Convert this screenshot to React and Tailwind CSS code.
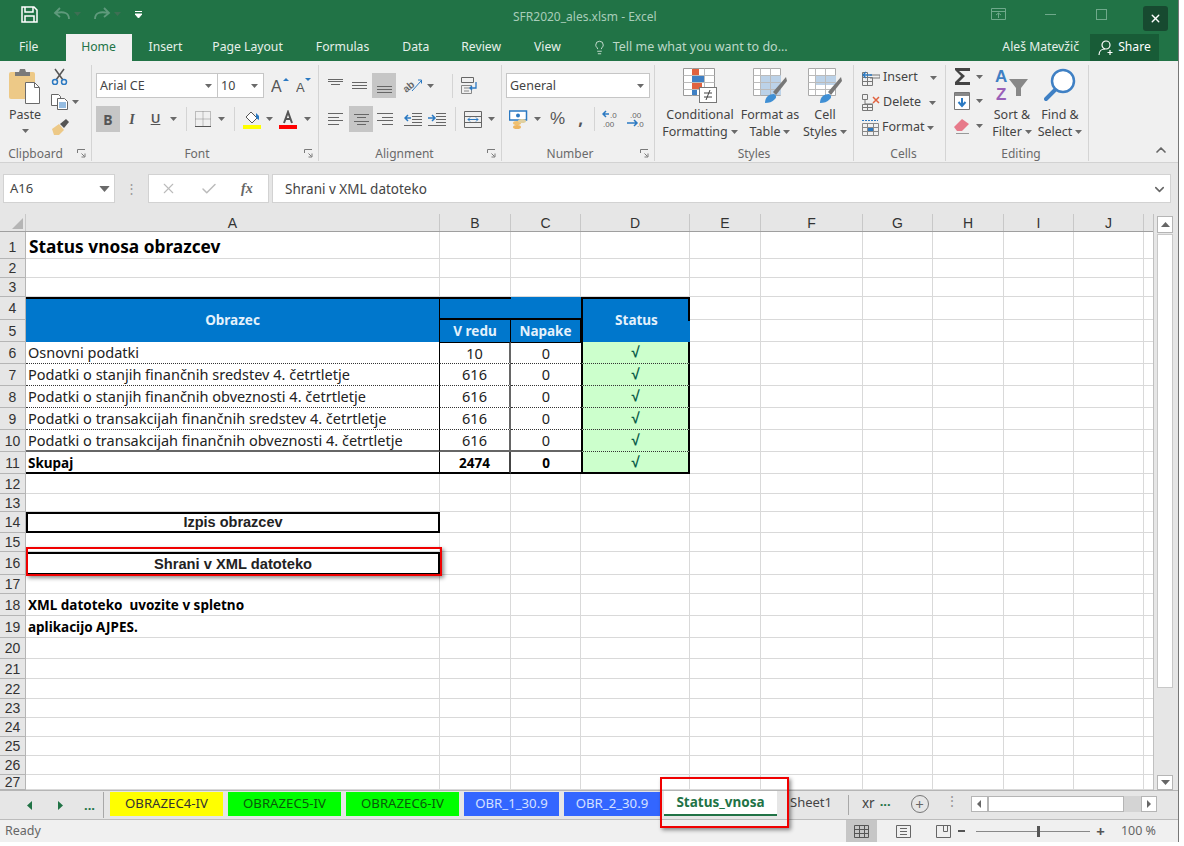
import { ChevronDown, ChevronUp, Lightbulb, X, Check } from 'lucide-react'

const Caret = ({ className = '' }) => (
  <svg width="7" height="4" viewBox="0 0 7 4" className={`shrink-0 ${className}`}><path d="M0 0h7L3.5 4z" fill="#6a6a6a" /></svg>
)

const Launcher = () => (
  <svg width="9" height="9" viewBox="0 0 9 9"><path d="M.5 4V.5H8M4.5 4.5l3 3M8 4.5V8H4.5" fill="none" stroke="#7a7a7a" /></svg>
)

// ── ribbon icons ─────────────────────────────────────────────
const PasteIcon = () => (
  <svg width="34" height="37" viewBox="0 0 34 37">
    <rect x="1" y="4" width="26" height="27" rx="2" fill="#edc987" />
    <path d="M7 8V4h4l1-3h5l1 3h4v4z" fill="#7a7a7a" />
    <path d="M17.500 14.500h9l5 5v16h-14z" fill="#fff" stroke="#6a6a6a" />
    <path d="M26.500 14.500v5h5" fill="none" stroke="#6a6a6a" />
  </svg>
)
const Scissors = () => (
  <svg width="17" height="17" viewBox="0 0 17 17" fill="none">
    <path d="M4 1l8 11M13 1L5 12" stroke="#555" strokeWidth="1.500" />
    <circle cx="4" cy="14" r="2.500" stroke="#2b79c2" strokeWidth="1.500" />
    <circle cx="13" cy="14" r="2.500" stroke="#2b79c2" strokeWidth="1.500" />
  </svg>
)
const CopyIcon = () => (
  <svg width="17" height="16" viewBox="0 0 17 16" fill="#fff" stroke="#666">
    <path d="M.5.500h7l2 2v9h-9z" />
    <path d="M6.500 4.500h7l3 3v8h-10z" />
    <path d="M8 9h7M8 11h7M8 13h7" stroke="#2b79c2" />
  </svg>
)
const BrushIcon = () => (
  <svg width="19" height="16" viewBox="0 0 19 16">
    <path d="M1 10l7-5 5 6-5 5H3z" fill="#edc987" />
    <path d="M9 5l6-5 3 3-5 6z" fill="#555" />
  </svg>
)
const BordersIcon = () => (
  <svg width="16" height="16" viewBox="0 0 16 16" fill="none">
    <path d="M.5 8h15M8 .5v15M.5.500h15v15H.500z" stroke="#888" strokeDasharray="1 1" />
    <path d="M0 15.500h16" stroke="#555" />
  </svg>
)
const FillIcon = () => (
  <svg width="18" height="19" viewBox="0 0 18 19">
    <path d="M3 7l5-5 6 6-5 5z" fill="#fff" stroke="#555" />
    <path d="M13 3l3 3v4l-3-2z" fill="#2b79c2" />
    <rect y="15" width="18" height="4" fill="#ffff00" />
  </svg>
)
const FontColorIcon = () => (
  <svg width="18" height="19" viewBox="0 0 18 19">
    <path d="M5 13L9 2l4 11M6.500 9h5" fill="none" stroke="#555" strokeWidth="2" />
    <rect y="15" width="18" height="4" fill="#ff0000" />
  </svg>
)
const Lines = ({ ys, xs }) => (
  <svg width="17" height="17" viewBox="0 0 17 17" fill="none" stroke="#666">
    {ys.map((y, i) => <path key={y} d={`M${xs[i][0]} ${y}.5H${xs[i][1]}`} />)}
  </svg>
)
const Orientation = () => (
  <svg width="20" height="18" viewBox="0 0 20 18" fill="none" className="overflow-visible">
    <text x="1" y="14" fontSize="10" fontWeight="700" fill="#666" transform="rotate(-40 5 12)" fontFamily="Liberation Sans, sans-serif">ab</text>
    <path d="M9 14L18 4M15 3h3.500v3.500" stroke="#2b79c2" />
  </svg>
)
const Indent = ({ flip }) => (
  <svg width="18" height="14" viewBox="0 0 18 14" fill="none">
    <path d="M8 1.500h10M8 4.500h10M8 7.500h10M8 10.500h10M0 13.500h18" stroke="#666" />
    <path d={flip ? 'M0 6h6M4 3l3 3-3 3' : 'M7 6H1M4 3L1 6l3 3'} stroke="#2b79c2" strokeWidth="1.500" />
  </svg>
)
const WrapIcon = () => (
  <svg width="19" height="17" viewBox="0 0 19 17" fill="none">
    <path d="M.5.500h12v5H.5z" stroke="#666" />
    <path d="M.5 8.500h10v8H.5zM3 11h6M3 14h5" stroke="#888" />
    <path d="M15 5v6H9M11 9l-2 2 2 2" stroke="#2b79c2" strokeWidth="1.300" />
  </svg>
)
const MergeIcon = () => (
  <svg width="18" height="17" viewBox="0 0 18 17" fill="none" stroke="#666">
    <path d="M.5.500h17v16H.500zM.5 5.500h17M.5 11.500h17" />
    <path d="M4 8.500h10M4 8.500l2-2M4 8.500l2 2M14 8.500l-2-2M14 8.500l-2 2" stroke="#2b79c2" />
  </svg>
)
const MoneyIcon = () => (
  <svg width="19" height="19" viewBox="0 0 19 19">
    <rect x="0.500" y="1" width="17" height="9" fill="#fff" stroke="#2b79c2" strokeWidth="1.500" />
    <circle cx="9" cy="5.500" r="2" fill="#2b79c2" />
    <ellipse cx="8" cy="13" rx="4" ry="2" fill="#f0c070" />
    <ellipse cx="13" cy="11" rx="4" ry="2" fill="#e0d0a0" />
    <ellipse cx="8" cy="17" rx="4" ry="2" fill="#edb560" />
  </svg>
)
const Decimals = ({ more }) => (
  <svg width="18" height="19" viewBox="0 0 18 19" fill="none">
    <path d={more ? 'M10 13H1M8 10l3 3-3 3' : 'M7 4H1M4 1L1 4l3 3'} stroke="#2b79c2" strokeWidth="1.500" />
    <text x={more ? 4 : 8} y="8" fontSize="8" fill="#666" fontFamily="Liberation Sans, sans-serif">{more ? '.00' : '.0'}</text>
    <text x={more ? 11 : 1} y="17" fontSize="8" fill="#666" fontFamily="Liberation Sans, sans-serif">{more ? '.0' : '.00'}</text>
  </svg>
)
const Conditional = () => (
  <svg width="34" height="36" viewBox="0 0 34 36">
    <path d="M.5.500h31v27H.500z" fill="#fff" stroke="#999" />
    <path d="M.5 7.500h31M.5 14.500h31M.5 21.500h31M9.500.5v27M21.500.5v27" stroke="#bbb" fill="none" />
    <rect x="9" y="1" width="7" height="6" fill="#e0623f" />
    <rect x="9" y="8" width="12" height="6" fill="#3f80c4" />
    <rect x="9" y="15" width="10" height="6" fill="#e0623f" />
    <rect x="9" y="22" width="5" height="5" fill="#3f80c4" />
    <rect x="16.500" y="19.500" width="17" height="15" fill="#fff" stroke="#777" />
    <path d="M21 25h8M21 29h8M27 22l-4 10" stroke="#444" fill="none" />
  </svg>
)
const TableStyle = ({ fill }) => (
  <svg width="34" height="36" viewBox="0 0 34 36">
    <path d="M.5.500h27v27H.500z" fill="#fff" stroke="#aaa" />
    <rect x="7" y="7" width="21" height={fill ? 10 : 20} fill="#bcd2e8" />
    <path d="M.5 7.500h27M.5 14.500h27M.5 21.500h27M7.500.5v27M17.500.5v27" stroke="#bbb" fill="none" />
    <path d="M33 9L20 24l3 3L34 13z" fill="#777" />
    <path d="M12 35c0-6 4-9 9-9 2 1 3 3 1 5-3 3-6 4-10 4z" fill="#3f8fd4" />
  </svg>
)
const InsertIcon = () => (
  <svg width="18" height="17" viewBox="0 0 18 17" fill="none" stroke="#777">
    <path d="M.5 3.500h5v5h-5zM.5 8.500h10v8H.5zM5.500 8.500v8M.5 12.500h10M8 6h10v3H8" />
    <path d="M10 6H1M4 3L1 6l3 3" stroke="#2b79c2" strokeWidth="1.300" />
  </svg>
)
const DeleteIcon = () => (
  <svg width="18" height="17" viewBox="0 0 18 17" fill="none" stroke="#777">
    <path d="M.5.500h5v5h-5zM.5 10.500h10v6H.5zM5.500 10.500v6M.5 13.500h10M3 6v4h8" />
    <path d="M11 3l6 6M17 3l-6 6" stroke="#e0623f" strokeWidth="1.500" />
  </svg>
)
const FormatIcon = () => (
  <svg width="17" height="17" viewBox="0 0 17 17" fill="none" stroke="#888">
    <path d="M.5 4.500h16v12H.500zM.5 8.500h16M.5 12.500h16M5.500 4.500v12M11.500 4.500v12" />
    <path d="M0 1.500h16" stroke="#2b79c2" strokeDasharray="2 1" />
    <rect x="6" y="9" width="5" height="3" fill="#2b79c2" stroke="none" />
  </svg>
)
const Sigma = () => (
  <svg width="17" height="17" viewBox="0 0 17 17"><path d="M1 0h15v3H5l6 5-6 6h11v3H1v-3l6-6-6-6z" fill="#444" /></svg>
)
const FillDown = () => (
  <svg width="16" height="18" viewBox="0 0 16 18">
    <path d="M.5.500h15v17H.500z" fill="#fff" stroke="#777" />
    <rect x="1" y="1" width="14" height="3" fill="#888" />
    <path d="M8 6v8M4.500 10L8 14l3.500-4" fill="none" stroke="#2b79c2" strokeWidth="2" />
  </svg>
)
const Eraser = () => (
  <svg width="16" height="16" viewBox="0 0 16 16">
    <path d="M0 9l8-8 7 5-7 7H3z" fill="#e77a8a" />
    <path d="M2 15.500h13" stroke="#999" />
  </svg>
)
const SortFilter = () => (
  <svg width="34" height="34" viewBox="0 0 34 34" fontFamily="Liberation Sans, sans-serif" fontWeight="700" fontSize="17" className="overflow-visible">
    <text x="0" y="14" fill="#3f80c4">A</text>
    <text x="1" y="32" fill="#9a60b8">Z</text>
    <path d="M14 11h19l-7 9v8h-5v-8z" fill="#888" />
  </svg>
)
const Magnifier = () => (
  <svg width="32" height="34" viewBox="0 0 32 34" fill="none">
    <circle cx="19" cy="13" r="11" fill="#fff" stroke="#3f80c4" strokeWidth="2.500" />
    <path d="M11 22L2 31" stroke="#3f80c4" strokeWidth="4" strokeLinecap="round" />
  </svg>
)

// ── ribbon pieces ────────────────────────────────────────────
function Group({ className, label, launcher, children }) {
  return (
    <div className={`flex flex-col h-[96px] border-r border-[#d4d4d4] shrink-0 ${className}`}>
      <div className="h-[81px] flex">{children}</div>
      <div className={`relative h-[15px] flex items-center justify-center text-[12px] text-[#6a6a6a] ${launcher ? 'pr-[20px]' : ''}`}>
        {label}
        {launcher && <span className="absolute right-[5px] top-[3px] flex"><Launcher /></span>}
      </div>
    </div>
  )
}

const Select = ({ className, text }) => (
  <div className={`h-[25px] bg-white border border-[#c6c6c6] flex items-center justify-between pl-[3px] pr-[3px] pt-[1px] text-[12.500px] text-[#444] ${className}`}>
    <span>{text}</span>
    <Caret className="mr-[2px]" />
  </div>
)

const BigButton = ({ className, icon, top, bottom }) => (
  <div className={`flex flex-col items-center text-[12.500px] leading-[17px] text-[#444] ${className}`}>
    <div className="h-[38px]">{icon}</div>
    <div className="whitespace-nowrap">{top}</div>
    <div className="flex items-center gap-[3px] whitespace-nowrap">{bottom}<Caret /></div>
  </div>
)

const CellCmd = ({ icon, label, gap }) => (
  <div className="h-[25px] flex items-center text-[12.500px] text-[#444]">
    {icon}
    <span className={`ml-[3px] ${gap}`}>{label}</span>
    <Caret />
  </div>
)

const Sep = () => <div className="w-px h-[24px] bg-[#d4d4d4]" />

// ── sheet ────────────────────────────────────────────────────
const ROW_CELL = 'border-r border-b border-[#d9d9d9]'
const DOTTED = 'border-b border-b-[#333] [border-bottom-style:dotted]'
const Blank = ({ last }) => <div className={last ? 'border-b border-[#d9d9d9]' : ROW_CELL} />

function SheetRow({ n, blanks, children, labelClass = '' }) {
  return (
    <>
      <div className={`bg-[#e6e6e6] border-r border-b border-[#b5b5b5] flex items-center justify-center text-[14px] leading-none text-[#333] font-['Liberation_Sans',sans-serif] ${labelClass}`}>{n}</div>
      {children}
      {Array.from({ length: blanks }).map((_, i) => <Blank key={i} last={i === blanks - 1} />)}
    </>
  )
}

const DATA = [
  [6, 'Osnovni podatki', '10'],
  [7, 'Podatki o stanjih finančnih sredstev 4. četrtletje', '616'],
  [8, 'Podatki o stanjih finančnih obveznosti 4. četrtletje', '616'],
  [9, 'Podatki o transakcijah finančnih sredstev 4. četrtletje', '616'],
  [10, 'Podatki o transakcijah finančnih obveznosti 4. četrtletje', '616'],
]

const Tick = ({ className }) => (
  <div className={`bg-[#ccffcc] border-l-2 border-r-2 border-black flex items-center justify-center text-[15px] font-bold text-[#0b5c4a] font-['Liberation_Sans',sans-serif] ${className}`}>√</div>
)

const TABS = [
  ['OBRAZEC4-IV', 'w-[113px] bg-[#ffff00] text-[#333]'],
  ['OBRAZEC5-IV', 'w-[113px] bg-[#00ff00] text-[#0a5a0a]'],
  ['OBRAZEC6-IV', 'w-[113px] bg-[#00ff00] text-[#0a5a0a]'],
  ['OBR_1_30.9', 'w-[95px] bg-[#3366ff] text-[#d5e0ff]'],
  ['OBR_2_30.9', 'w-[96px] bg-[#3366ff] text-[#d5e0ff]'],
]

export default function App() {
  const heads = [['A', 'w-[414px]'], ['B', 'w-[71px]'], ['C', 'w-[70px]'], ['D', 'w-[109px]'], ['E', 'w-[71px]'], ['F', 'w-[102px]'], ['G', 'w-[70px]'], ['H', 'w-[71px]'], ['I', 'w-[70px]'], ['J', 'w-[70px]']]

  return (
    <div className="w-[1184px] h-[846px] bg-white overflow-hidden font-['Noto_Sans',sans-serif]">
      <div className="relative w-[1179px] h-[842px] flex flex-col bg-[#e6e6e6] border-r border-[#777] overflow-hidden">

        {/* title bar */}
        <div className="h-[34px] bg-[#217346] flex items-center shrink-0 relative text-[12px] text-[#a8cdb9]">
          <svg width="17" height="17" viewBox="0 0 17 17" className="ml-[21px] mt-[-6px]" fill="none" stroke="#fff" strokeWidth="1.500">
            <path d="M1 1h12l3 3v12H1z" />
            <path d="M4 1v5h8V1M4 16v-6h9v6" />
          </svg>
          <svg width="18" height="14" viewBox="0 0 18 14" className="ml-[15px] mt-[-6px]" fill="none" stroke="#5f9a7c" strokeWidth="1.800">
            <path d="M16 12c0-6-5-8-13-6M7 1L2 6l5 4" />
          </svg>
          <Caret className="ml-[3px] mt-[-6px] opacity-40" />
          <svg width="18" height="14" viewBox="0 0 18 14" className="ml-[12px] mt-[-6px]" fill="none" stroke="#5f9a7c" strokeWidth="1.800">
            <path d="M2 12c0-6 5-8 13-6M11 1l5 5-5 4" />
          </svg>
          <Caret className="ml-[3px] mt-[-6px] opacity-40" />
          <svg width="7" height="8" viewBox="0 0 7 8" className="ml-[14px] mt-[-5px]"><path d="M0 .5h7M0 3h7l-3.500 4z" stroke="#fff" fill="#fff" strokeWidth="1" /></svg>
          <span className="ml-[371px] mt-[-1px] text-[12px]">SFR2020_ales.xlsm - Excel</span>
          <svg width="15" height="12" viewBox="0 0 15 12" className="ml-[334px] mt-[-6px]" fill="none" stroke="#6fa98b"><path d="M.5.500h14v11H.5zM.5 3.500h14M7.500 10V5M5 7l2.500-2L10 7" /></svg>
          <div className="ml-[39px] mt-[-6px] w-[11px] h-px bg-[#6fa98b]" />
          <div className="ml-[40px] mt-[-6px] w-[11px] h-[11px] border border-[#6fa98b]" />
          <div className="ml-[36px] mt-[2px] w-[25px] h-[25px] rounded-[3px] bg-[#174a30] flex items-center justify-center">
            <X size={13} color="#fff" strokeWidth={2.500} />
          </div>
        </div>

        {/* ribbon tabs */}
        <div className="h-[27px] bg-[#217346] flex items-end shrink-0 text-[12.200px] text-[#e6f0ea]">
          <div className="ml-[19px] h-[27px] flex items-center">File</div>
          <div className="ml-[27px] w-[66px] h-[27px] bg-[#f0f0f0] text-[#217346] flex items-center justify-center">Home</div>
          <div className="ml-[17px] h-[27px] flex items-center">Insert</div>
          <div className="ml-[30px] h-[27px] flex items-center">Page Layout</div>
          <div className="ml-[33px] h-[27px] flex items-center">Formulas</div>
          <div className="ml-[33px] h-[27px] flex items-center">Data</div>
          <div className="ml-[32px] h-[27px] flex items-center">Review</div>
          <div className="ml-[33px] h-[27px] flex items-center">View</div>
          <div className="ml-[31px] h-[27px] flex items-center text-[12.500px] text-[#bcd8c8]">
            <Lightbulb size={15} strokeWidth={1.300} color="#e6f0ea" />
            <span className="ml-[6px]">Tell me what you want to do...</span>
          </div>
          <div className="ml-auto h-[27px] flex items-center">Aleš Matevžič</div>
          <div className="ml-[11px] mr-[19px] w-[69px] h-[27px] bg-[#185c37] flex items-center justify-center gap-[3px] text-white">
            <svg width="17" height="16" viewBox="0 0 17 16" fill="none" stroke="#fff" strokeWidth="1.200">
              <circle cx="8" cy="5" r="4" />
              <path d="M1 15c0-4 3-6 6-6M12 10v5M9.500 12.500h5" />
            </svg>
            Share
          </div>
        </div>

        {/* ribbon */}
        <div className="h-[102px] bg-[#f0f0f0] border-b border-[#d2d2d2] flex pt-[4px] shrink-0">
          <Group className="w-[92px]" label="Clipboard" launcher>
            <div className="ml-[8px] w-[34px] pt-[3px] flex flex-col items-center text-[12.500px] text-[#444]">
              <PasteIcon />
              <span className="mt-[1px] leading-[18px]">Paste</span>
              <Caret className="mt-[5px]" />
            </div>
            <div className="ml-[9px] pt-[3px] flex flex-col gap-[9px]">
              <Scissors />
              <div className="flex items-center gap-[4px]"><CopyIcon /><Caret /></div>
              <BrushIcon />
            </div>
          </Group>

          <Group className="w-[227px] pl-[4px]" label="Font" launcher>
            <div className="pt-[8px] flex flex-col gap-[8px]">
              <div className="flex items-center">
                <Select className="w-[122px]" text="Arial CE" />
                <Select className="w-[47px] ml-[-1px]" text="10" />
                <svg width="20" height="19" viewBox="0 0 20 19" className="ml-[7px]" fontFamily="Liberation Sans, sans-serif" fontSize="16"><text x="0" y="16" fill="#555">A</text><path d="M12 5l3-3 3 3z" fill="#2b79c2" /></svg>
                <svg width="17" height="19" viewBox="0 0 17 19" className="ml-[5px]" fontFamily="Liberation Sans, sans-serif" fontSize="13"><text x="0" y="16" fill="#555">A</text><path d="M9 2h6l-3 3z" fill="#2b79c2" /></svg>
              </div>
              <div className="flex items-center h-[26px] text-[#555]">
                <div className="w-[24px] h-[26px] bg-[#c6c6c6] flex items-center justify-center font-bold text-[14px]">B</div>
                <div className="ml-[4px] w-[16px] text-center italic font-semibold text-[14px] font-['Liberation_Serif',serif]">I</div>
                <div className="ml-[8px] w-[15px] text-center underline font-semibold text-[13px]">U</div>
                <Caret className="ml-[7px]" />
                <div className="ml-[9px]"><Sep /></div>
                <div className="ml-[8px]"><BordersIcon /></div>
                <Caret className="ml-[7px]" />
                <div className="ml-[9px]"><Sep /></div>
                <div className="ml-[8px]"><FillIcon /></div>
                <Caret className="ml-[5px]" />
                <div className="ml-[6px]"><FontColorIcon /></div>
                <Caret className="ml-[7px]" />
              </div>
            </div>
          </Group>

          <Group className="w-[183px] pl-[9px]" label="Alignment" launcher>
            <div className="pt-[8px] flex flex-col gap-[8px]">
              <div className="flex items-center h-[25px]">
                <Lines ys={[2, 4, 7]} xs={[[0, 15], [0, 15], [3, 12]]} />
                <div className="ml-[7px]"><Lines ys={[5, 8, 11]} xs={[[0, 15], [0, 15], [0, 15]]} /></div>
                <div className="ml-[3px] w-[24px] h-[25px] bg-[#c6c6c6] flex items-center justify-center"><Lines ys={[9, 12, 15]} xs={[[1, 16], [1, 16], [1, 16]]} /></div>
                <div className="ml-[7px]"><Orientation /></div>
                <Caret className="ml-[4px]" />
                <div className="ml-[18px]"><Sep /></div>
                <div className="ml-[8px]"><WrapIcon /></div>
              </div>
              <div className="flex items-center h-[26px]">
                <Lines ys={[2, 6, 9, 13]} xs={[[0, 15], [0, 11], [0, 15], [0, 11]]} />
                <div className="ml-[4px] w-[24px] h-[26px] bg-[#c6c6c6] flex items-center justify-center"><Lines ys={[3, 6, 10, 13]} xs={[[1, 16], [4, 13], [1, 16], [4, 13]]} /></div>
                <div className="ml-[4px]"><Lines ys={[2, 6, 9, 13]} xs={[[0, 16], [5, 16], [0, 16], [5, 16]]} /></div>
                <div className="ml-[10px]"><Indent /></div>
                <div className="ml-[6px]"><Indent flip /></div>
                <div className="ml-[9px]"><Sep /></div>
                <div className="ml-[8px]"><MergeIcon /></div>
                <Caret className="ml-[6px]" />
              </div>
            </div>
          </Group>

          <Group className="w-[153px] pl-[4px]" label="Number" launcher>
            <div className="pt-[8px] flex flex-col gap-[8px]">
              <Select className="w-[144px]" text="General" />
              <div className="flex items-center h-[26px]">
                <div className="ml-[3px]"><MoneyIcon /></div>
                <Caret className="ml-[6px]" />
                <span className="ml-[9px] text-[17px] text-[#555] font-['Liberation_Sans',sans-serif]">%</span>
                <span className="ml-[13px] w-[10px] text-[17px] font-bold text-[#555]">,</span>
                <div className="ml-[6px]"><Sep /></div>
                <div className="ml-[7px]"><Decimals /></div>
                <div className="ml-[6px]"><Decimals more /></div>
              </div>
            </div>
          </Group>

          <Group className="w-[199px]" label="Styles">
            <div className="pt-[3px] flex">
              <BigButton className="w-[78px] ml-[6px]" icon={<Conditional />} top="Conditional" bottom="Formatting" />
              <BigButton className="w-[58px] ml-[2px]" icon={<TableStyle />} top="Format as" bottom="Table" />
              <BigButton className="w-[44px] ml-[4px]" icon={<TableStyle fill />} top="Cell" bottom="Styles" />
            </div>
          </Group>

          <Group className="w-[92px] pl-[8px]" label="Cells">
            <div className="pt-[0px]">
              <CellCmd icon={<InsertIcon />} label="Insert" gap="mr-[12px]" />
              <CellCmd icon={<DeleteIcon />} label="Delete" gap="mr-[8px]" />
              <CellCmd icon={<FormatIcon />} label="Format" gap="mr-[3px]" />
            </div>
          </Group>

          <Group className="w-[143px] pl-[8px]" label="Editing">
            <div className="pt-[3px] w-[34px] flex flex-col gap-[7px]">
              <div className="flex items-center gap-[5px]"><Sigma /><Caret /></div>
              <div className="flex items-center gap-[6px]"><FillDown /><Caret /></div>
              <div className="flex items-center gap-[6px] mt-[1px]"><Eraser /><Caret /></div>
            </div>
            <BigButton className="w-[38px] ml-[5px] pt-[3px]" icon={<SortFilter />} top="Sort &" bottom="Filter" />
            <BigButton className="w-[44px] ml-[7px] pt-[3px]" icon={<Magnifier />} top="Find &" bottom="Select" />
          </Group>

          <div className="flex-1 flex justify-end items-end pr-[9px] pb-[4px]">
            <ChevronUp size={16} strokeWidth={2.500} color="#666" />
          </div>
        </div>

        {/* formula bar */}
        <div className="h-[51px] pt-[11px] pl-[3px] flex shrink-0 items-start">
          <div className="w-[112px] h-[29px] bg-white border border-[#d2d2d2] flex items-center justify-between px-[6px] pt-[1px] text-[13px] text-[#444]">
            A16
            <Caret className="scale-150" />
          </div>
          <div className="w-[33px] h-[29px] flex items-center justify-center text-[#999] text-[13px] leading-none">⋮</div>
          <div className="w-[121px] h-[29px] bg-white border border-[#d2d2d2] flex items-center">
            <X size={17} strokeWidth={1.500} color="#bbb" className="ml-[11px]" />
            <Check size={18} strokeWidth={2} color="#bbb" className="ml-[23px]" />
            <span className="ml-[23px] italic font-semibold text-[14px] text-[#666] font-['Liberation_Serif',serif]">fx</span>
          </div>
          <div className="ml-[3px] w-[899px] h-[29px] bg-white border border-[#d2d2d2] flex items-center justify-between pl-[12px] pr-[3px] pt-[1px] text-[13.500px] text-[#444]">
            Shrani v XML datoteko
            <ChevronDown size={15} strokeWidth={2.500} color="#666" />
          </div>
        </div>

        {/* column headers + cells + scrollbar */}
        <div className="flex h-[576px] shrink-0 bg-white">
          <div className="w-[1154px] shrink-0 flex flex-col border-r border-[#c0c0c0]">
            <div className="h-[18px] flex bg-[#e6e6e6] border-b border-[#9f9f9f] text-[14px] leading-none text-[#333] font-['Liberation_Sans',sans-serif] shrink-0">
              <div className="w-[26px] border-r border-[#c8c8c8] flex items-end justify-end p-[2px]">
                <svg width="11" height="11" viewBox="0 0 11 11"><path d="M11 0v11H0z" fill="#b5b5b5" /></svg>
              </div>
              {heads.map(([h, w]) => (
                <div key={h} className={`${w} border-r border-[#c8c8c8] flex items-center justify-center`}>{h}</div>
              ))}
            </div>

            <div className="grid flex-1 grid-cols-[26px_414px_71px_70px_109px_71px_102px_70px_71px_70px_70px_9px] grid-rows-[27px_19px_19px_23px_22px_22px_22px_22px_22px_22px_22px_20px_18px_21px_19px_23px_19px_22px_22px_21px_20px_20px_19px_19px_19px_19px_15px] text-[14.500px] text-[#222]">
              <SheetRow n={1} blanks={10} labelClass="pt-[3px]">
                <div className={`${ROW_CELL} pl-[3px] pt-[3px] flex items-center text-[17.300px] font-bold text-black whitespace-nowrap`}>Status vnosa obrazcev</div>
              </SheetRow>
              <SheetRow n={2} blanks={11} />
              <SheetRow n={3} blanks={11} />

              <SheetRow n={4} blanks={7}>
                <div className="row-span-2 bg-[#0077cc] border-t-2 border-r border-black flex items-center justify-center font-bold text-[13.500px] text-[#e4f1fb]">Obrazec</div>
                <div className="col-span-2 bg-[#0077cc] border-b-2 border-black relative">
                  <div className="absolute top-0 left-0 w-[71px] h-[2px] bg-black" />
                </div>
                <div className="row-span-2 bg-[#0077cc] border-l-2 border-t-2 border-black flex items-center justify-center font-bold text-[13.500px] text-[#e4f1fb] relative">
                  Status
                  <div className="absolute top-0 right-0 w-[2px] h-[22px] bg-black" />
                </div>
              </SheetRow>
              <SheetRow n={5} blanks={7}>
                <div className="bg-[#0077cc] border-r border-black flex items-center justify-center font-bold text-[13.500px] text-[#e4f1fb]">V redu</div>
                <div className="bg-[#0077cc] border-r border-black flex items-center justify-center font-bold text-[13.500px] text-[#e4f1fb]">Napake</div>
              </SheetRow>

              {DATA.map(([n, label, ok], i) => (
                <SheetRow key={n} n={n} blanks={7}>
                  <div className={`pl-[2px] pt-[1px] flex items-center whitespace-nowrap border-r border-r-black ${i === 4 ? 'border-b-2 border-b-[#666]' : DOTTED}`}>{label}</div>
                  <div className={`pt-[1px] flex items-center justify-center border-r-2 border-r-[#666] ${i === 0 ? 'border-t border-t-black' : ''} ${i === 4 ? 'border-b-2 border-b-[#666]' : DOTTED}`}>{ok}</div>
                  <div className={`pt-[1px] flex items-center justify-center ${i === 0 ? 'border-t border-t-black' : ''} ${i === 4 ? 'border-b-2 border-b-[#666]' : DOTTED}`}>0</div>
                  <Tick className={DOTTED} />
                </SheetRow>
              ))}

              <SheetRow n={11} blanks={7}>
                <div className="pl-[2px] pt-[2px] flex items-center font-bold text-[13.500px] text-black border-r border-b-2 border-black">Skupaj</div>
                <div className="pt-[2px] flex items-center justify-center font-bold text-[13.500px] text-black border-r-2 border-b-2 border-r-[#444] border-b-black">2474</div>
                <div className="pt-[2px] flex items-center justify-center font-bold text-[13.500px] text-black border-b-2 border-black">0</div>
                <Tick className="border-b-2 border-b-black" />
              </SheetRow>
              <SheetRow n={12} blanks={11} />
              <SheetRow n={13} blanks={11} />
              <SheetRow n={14} blanks={10}>
                <div className="border-2 border-black flex items-center justify-center font-bold text-[14.500px] text-[#222] font-['Liberation_Sans',sans-serif]">Izpis obrazcev</div>
              </SheetRow>
              <SheetRow n={15} blanks={11} />
              <SheetRow n={16} blanks={10}>
                <div className="border-2 border-black pt-[2px] flex items-center justify-center font-bold text-[14.700px] text-[#222] font-['Liberation_Sans',sans-serif]">Shrani v XML datoteko</div>
              </SheetRow>
              <SheetRow n={17} blanks={11} />
              <SheetRow n={18} blanks={10}>
                <div className={`${ROW_CELL} pl-[2px] pt-[1px] flex items-center font-bold text-[13.500px] text-black`}>XML datoteko&nbsp; uvozite v spletno</div>
              </SheetRow>
              <SheetRow n={19} blanks={10}>
                <div className={`${ROW_CELL} pl-[2px] pt-[2px] flex items-center font-bold text-[13.500px] text-black`}>aplikacijo AJPES.</div>
              </SheetRow>
              {[20, 21, 22, 23, 24, 25, 26, 27].map((n) => <SheetRow key={n} n={n} blanks={11} />)}
            </div>
          </div>

          <div className="w-[24px] bg-[#e6e6e6] pl-[3px] pr-[5px] pt-[2px] flex flex-col shrink-0">
            <div className="h-[17px] bg-white border border-[#b5b5b5] flex items-center justify-center">
              <svg width="9" height="5" viewBox="0 0 9 5"><path d="M0 5l4.500-5L9 5z" fill="#666" /></svg>
            </div>
            <div className="mt-[1px] h-[454px] bg-white border border-[#c8c8c8]" />
            <div className="mt-auto h-[15px] bg-white border border-[#b5b5b5] flex items-center justify-center">
              <svg width="9" height="5" viewBox="0 0 9 5"><path d="M0 0l4.500 5L9 0z" fill="#666" /></svg>
            </div>
          </div>
        </div>

        {/* sheet tabs */}
        <div className="h-[30px] bg-[#e6e6e6] border-t border-t-[#b5b5b5] border-b border-b-[#bcbcbc] flex items-start shrink-0 text-[13.500px]">
          <div className="w-[104px] h-[26px] mt-[1px] flex items-center text-[#217346] border-r border-[#a8a8a8]">
            <svg width="5" height="9" viewBox="0 0 5 9" className="ml-[27px]"><path d="M5 0v9L0 4.500z" fill="#217346" /></svg>
            <svg width="5" height="9" viewBox="0 0 5 9" className="ml-[26px]"><path d="M0 0v9l5-4.500z" fill="#217346" /></svg>
            <span className="ml-[21px] font-bold text-[13px] leading-none">...</span>
          </div>
          <div className="flex gap-[5px] ml-[6px] mt-[1px]">
            {TABS.map(([t, c]) => (
              <div key={t} className={`h-[24px] flex items-center justify-center whitespace-nowrap text-[13.200px] ${c}`}>{t}</div>
            ))}
          </div>
          <div className="ml-[4px] w-[113px] h-[25px] bg-white border-b-2 border-[#217346] flex items-center justify-center font-bold text-[#217346]">Status_vnosa</div>
          <span className="ml-[13px] mt-[2px] text-[13px] text-[#444]">Sheet1</span>
          <div className="ml-[16px] mt-[4px] w-px h-[20px] bg-[#a8a8a8]" />
          <span className="ml-[13px] mt-[2px] text-[#444]">xr</span>
          <span className="ml-[5px] mt-[4px] font-bold text-[#217346] text-[13px] leading-none">...</span>
          <div className="ml-[20px] mt-[4px] w-[18px] h-[18px] rounded-full border border-[#777] flex items-center justify-center text-[#666] text-[15px] leading-none">+</div>
          <span className="ml-[16px] mt-[4px] text-[#999] leading-none">⋮</span>
          <div className="ml-[12px] mt-[5px] w-[186px] h-[16px] bg-[#d4d4d4] flex justify-between">
            <div className="flex">
              <div className="w-[17px] h-[16px] bg-white border border-[#b5b5b5] flex items-center justify-center"><svg width="4" height="8" viewBox="0 0 4 8"><path d="M4 0v8L0 4z" fill="#666" /></svg></div>
              <div className="w-[136px] h-[16px] bg-white border border-[#b5b5b5]" />
            </div>
            <div className="w-[16px] h-[16px] bg-white border border-[#b5b5b5] flex items-center justify-center"><svg width="4" height="8" viewBox="0 0 4 8"><path d="M0 0v8l4-4z" fill="#666" /></svg></div>
          </div>
        </div>

        {/* status bar */}
        <div className="flex-1 bg-[#f0f0f0] flex items-center text-[12.500px] text-[#666]">
          <span className="ml-[5px]">Ready</span>
          <div className="ml-auto flex items-center h-full">
            <div className="w-[31px] h-full bg-[#c6c6c6] flex items-center justify-center">
              <svg width="15" height="13" viewBox="0 0 15 13" fill="none" stroke="#555"><path d="M.5.500h14v12H.500zM.5 4.500h14M.5 8.500h14M5.500.5v12M10.500.5v12" /></svg>
            </div>
            <div className="ml-[19px]">
              <svg width="15" height="13" viewBox="0 0 15 13" fill="none" stroke="#666"><path d="M.5.500h14v12H.500zM4 3.500h7M4 6.500h7M4 9.500h7" /></svg>
            </div>
            <div className="ml-[25px]">
              <svg width="15" height="13" viewBox="0 0 15 13" fill="none" stroke="#666"><path d="M.5.500h14v12H.500zM7.500.5v6h4V.5" /></svg>
            </div>
            <span className="ml-[7px] w-[7px] h-[2px] bg-[#555]" />
            <div className="ml-[11px] w-[114px] h-px bg-[#888] relative">
              <div className="absolute left-[61px] top-[-5px] w-[3px] h-[11px] bg-[#555]" />
            </div>
            <span className="ml-[6px] font-bold text-[15px] leading-none text-[#555]">+</span>
            <span className="ml-[16px] mr-[22px]">100 %</span>
          </div>
        </div>

        {/* red callouts on top of the sheet */}
        <div className="absolute left-[26px] top-[547px] w-[416px] h-[29px] border-2 border-[#f00000] shadow-[2px_2px_4px_rgba(0,0,0,0.45)]" />
        <div className="absolute left-[660px] top-[777px] w-[129px] h-[51px] border-2 border-[#f00000] shadow-[2px_2px_4px_rgba(0,0,0,0.45)]" />
      </div>
    </div>
  )
}
